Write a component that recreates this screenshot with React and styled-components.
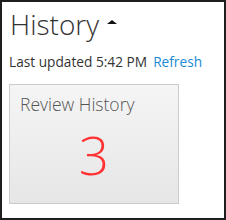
import React from 'react';
import styled, { createGlobalStyle } from 'styled-components';

const GlobalStyle = createGlobalStyle`
  html, body {
    margin: 0;
    padding: 0;
    background: #fff;
    font-family: "Open Sans", "Liberation Sans", sans-serif;
  }
`;

const Panel = styled.div`
  box-sizing: border-box;
  width: 226px;
  height: 220px;
  border: 2px solid #1e1e1e;
  box-shadow: inset 0 0 0 1px #fff;
  padding: 4px 8px 0 7px;
`;

const Title = styled.h2`
  margin: 0;
  display: flex;
  align-items: center;
  gap: 8px;
  font-size: 28px;
  font-weight: 300;
  color: #333;
  line-height: 36px;
  padding-left: 1px;
`;

const Caret = styled.span`
  width: 0;
  height: 0;
  border-left: 5px solid transparent;
  border-right: 5px solid transparent;
  border-bottom: 4px solid #111;
  margin-top: -4px;
`;

const Status = styled.div`
  margin-top: 12px;
  font-size: 13.7px;
  color: #333;
  display: flex;
  gap: 6px;
  line-height: 16px;
`;

const RefreshLink = styled.a`
  color: #1a8ad4;
  text-decoration: none;
  cursor: pointer;
`;

const Tile = styled.div`
  box-sizing: border-box;
  margin-top: 14px;
  width: 170px;
  height: 120px;
  border: 1px solid #ccc;
  background: linear-gradient(#f5f5f5, #e6e6e6);
  display: flex;
  flex-direction: column;
  align-items: stretch;
`;

const TileLabel = styled.div`
  padding: 8px 0 0 10px;
  font-size: 17.5px;
  font-weight: 300;
  color: #555;
  line-height: 22px;
`;

const TileCount = styled.div`
  text-align: center;
  font-size: 53px;
  font-weight: 300;
  color: #f33;
  line-height: 72px;
  margin-top: 4px;
`;

export default function App() {
  return (
    <>
      <GlobalStyle />
      <Panel>
        <Title>
          History <Caret />
        </Title>
        <Status>
          <span>Last updated 5:42 PM</span>
          <RefreshLink>Refresh</RefreshLink>
        </Status>
        <Tile>
          <TileLabel>Review History</TileLabel>
          <TileCount>3</TileCount>
        </Tile>
      </Panel>
    </>
  );
}
